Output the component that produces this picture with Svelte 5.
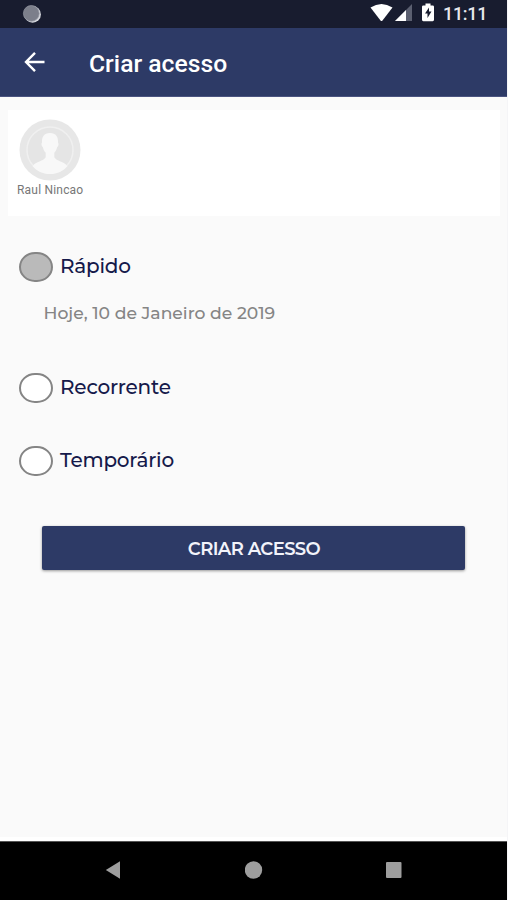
<script>
  let selected = 'rapido';

  const contact = 'Raul Nincao';
  const options = [
    { id: 'rapido', label: 'Rápido', detail: 'Hoje, 10 de Janeiro de 2019' },
    { id: 'recorrente', label: 'Recorrente' },
    { id: 'temporario', label: 'Temporário' },
  ];
</script>

<div class="screen">
  <div class="status-bar">
    <svg class="sync" width="20" height="20" viewBox="0 0 20 20">
      <circle cx="10.6" cy="10.4" r="8.3" fill="#d5d7dd" />
      <circle cx="9.3" cy="9.4" r="7.9" fill="#7c7f8b" stroke="#9497a2" stroke-width="0.7" />
    </svg>
    <svg class="system" width="66" height="22" viewBox="0 0 66 22">
      <path d="M0.5 5.5Q11.5 -1.5 22.5 5.5L12.5 18.5Q11.5 19.5 10.5 18.5Z" fill="#fff" />
      <path d="M42 2V19H25Z" fill="#5b5f70" />
      <path d="M36 8V19H25Z" fill="#fff" />
      <path d="M55.5 1.5h5v2h2.2q1.3 0 1.3 1.3v13q0 1.4-1.3 1.4h-9.4q-1.3 0-1.3-1.4v-13q0-1.3 1.3-1.3h2.2z" fill="#fff" />
      <path d="M59 5.5v4h2.5L57.5 16v-4.5H55z" fill="#181c2f" />
    </svg>
    <span class="clock">11:11</span>
  </div>

  <header>
    <button class="back" aria-label="Voltar">
      <svg width="22" height="22" viewBox="0 0 22 22" fill="none" stroke="#fff" stroke-width="2.4">
        <path d="M20.5 11H2.5M11 1.8L2 11L11 20.2" />
      </svg>
    </button>
    <h1>Criar acesso</h1>
  </header>

  <main>
    <section class="card">
      <svg width="62" height="62" viewBox="0 0 62 62">
        <circle cx="31" cy="31" r="30.5" fill="#e7e7e7" />
        <circle cx="31" cy="31" r="23" fill="#e5e5e5" stroke="#f0f0f0" stroke-width="1.5" />
        <path d="M31 14c6 0 8.3 4 8 9.5c1 1 .5 4-.9 4.8c-.5 2.5-1.6 4.200-2.8 5.400v4.500c2 4 10 4 13 9c-4 4.800-10 7.800-17.300 7.800s-13.300-3-17.300-7.800c3-5 11-5 13-9v-4.500c-1.200-1.200-2.300-2.900-2.800-5.400c-1.400-.8-1.900-3.800-.9-4.800c-.3-5.500 2-9.500 8-9.500z" fill="#f8f8f8" />
      </svg>
      <span class="name">{contact}</span>
    </section>

    <div class="options">
      {#each options as option}
        <div class="option">
          <button class="row" on:click={() => (selected = option.id)}>
            <span class="radio" class:checked={selected === option.id}></span>
            <span class="label">{option.label}</span>
          </button>
          {#if option.detail}
            <p>{option.detail}</p>
          {/if}
        </div>
      {/each}
    </div>

    <button class="submit">CRIAR ACESSO</button>
  </main>

  <nav>
    <svg width="16" height="20" viewBox="0 0 16 20"><path d="M15 1.2V18.8L.8 10Z" fill="#9e9e9e" /></svg>
    <svg width="18" height="20" viewBox="0 0 18 20"><circle cx="8.5" cy="10" r="8.7" fill="#9e9e9e" /></svg>
    <svg width="16" height="20" viewBox="0 0 16 20"><rect y="2" width="15.5" height="16" rx="1" fill="#9e9e9e" /></svg>
  </nav>
</div>

<style>
  :global(body) {
    margin: 0;
    background: #f5f5f7;
  }
  .screen {
    width: 507px;
    height: 900px;
    display: flex;
    flex-direction: column;
    overflow: hidden;
    background: #fafafa;
    font-family: Montserrat, Inter, sans-serif;
  }
  button {
    padding: 0;
    border: none;
    background: none;
    font-family: inherit;
    cursor: pointer;
  }
  svg {
    display: block;
    flex: none;
  }
  .status-bar {
    height: 28px;
    flex: none;
    display: flex;
    align-items: center;
    background: #181c2f;
    color: #fff;
  }
  .sync {
    margin: 0 auto 1px 22px;
  }
  .system {
    margin-bottom: 2px;
  }
  .clock {
    width: 43px;
    margin: 0 21px 1px 7px;
    font: 500 18px Roboto, sans-serif;
    letter-spacing: -0.3px;
    color: #e8e8ec;
    white-space: nowrap;
  }
  header {
    height: 69px;
    flex: none;
    display: flex;
    align-items: center;
    box-sizing: border-box;
    border-bottom: 1px solid #4b5480;
    background: #2d3a66;
  }
  .back {
    margin: 0 0 0 24px;
  }
  h1 {
    margin: 3px 0 0 43px;
    font: 500 24.7px Roboto, sans-serif;
    color: #fff;
  }
  main {
    flex: 1;
    border-bottom: 4px solid #fff;
  }
  .card {
    height: 106px;
    margin: 13px 7px 0 8px;
    padding: 9px 0 0 8px;
    box-sizing: border-box;
    background: #fff;
  }
  .card svg {
    margin-left: 3px;
  }
  .name {
    display: block;
    margin: 2px 0 0 1px;
    font: 12px/14px Roboto, sans-serif;
    letter-spacing: 0.2px;
    color: #777;
  }
  .options {
    padding: 35.5px 0 0 19px;
  }
  .option {
    margin-bottom: 43px;
  }
  .row {
    height: 30px;
    display: flex;
    align-items: center;
  }
  .radio {
    width: 34px;
    height: 30px;
    box-sizing: border-box;
    border: 2px solid #858585;
    border-radius: 16px / 15px;
    background: #fff;
  }
  .radio.checked {
    background: #bababa;
  }
  .label {
    margin: -2px 0 0 7px;
    font-size: 20px;
    font-weight: 500;
    letter-spacing: -0.2px;
    color: #15194a;
  }
  p {
    margin: 21px 0 0 24.5px;
    height: 27px;
    font-size: 17.2px;
    font-weight: 500;
    line-height: 20px;
    color: #858585;
  }
  .submit {
    display: block;
    width: 423px;
    height: 44px;
    margin: 50.5px 0 0 42px;
    padding: 2px 0 0 1px;
    border-radius: 2px;
    background: #2d3a66;
    box-shadow: 0 1px 3px rgba(0, 0, 0, 0.4);
    font-size: 18px;
    font-weight: 600;
    letter-spacing: -0.6px;
    color: #f2f3fa;
  }
  nav {
    height: 59px;
    flex: none;
    display: flex;
    justify-content: space-between;
    align-items: center;
    box-sizing: border-box;
    padding: 0 105px 2px;
    border-top: 1px solid #555;
    background: #000;
  }
</style>
